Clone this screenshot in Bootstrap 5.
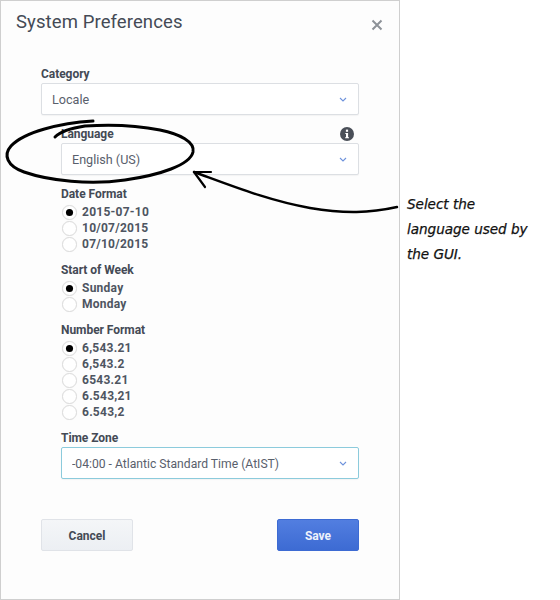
<!DOCTYPE html>
<html lang="en">
<head>
<meta charset="utf-8">
<title>System Preferences</title>
<link href="https://cdn.jsdelivr.net/npm/bootstrap@5.3.0/dist/css/bootstrap.min.css" rel="stylesheet">
<style>
html,body{margin:0;background:#fff;}
body{font-family:Roboto,"Liberation Sans",sans-serif;color:#444a55;width:560px;height:600px;overflow:hidden;position:relative;}
.dlg{width:400px;height:600px;background:#fdfdfd;border:1px solid #cfcfcf;padding:0 40px;}
.dlg-head{height:66px;margin:0 -40px;padding:11px 16px 0 15px;display:flex;justify-content:space-between;align-items:flex-start;}
.dlg-title{font-size:18.5px;line-height:21px;font-weight:400;color:#444a55;margin:0;letter-spacing:.1px;}
.dlg-x{margin-top:7px;display:block;}
.fld-label{font-size:12px;line-height:14px;font-weight:700;color:#444a55;margin:0;display:flex;justify-content:space-between;align-items:center;letter-spacing:-.05px;}
.fld-label svg{margin-right:5px;}
.sel{display:block;height:32px;margin-top:2px;padding:2px 30px 0 10px;font-size:12.6px;line-height:28px;color:#59606c;border:1px solid #dcdfe3;border-radius:2px;background-color:#fff;background-size:8px 5px;background-position:right 11px center;background-image:url("data:image/svg+xml,%3Csvg xmlns='http://www.w3.org/2000/svg' viewBox='0 0 8 5'%3E%3Cpath d='M1 1 4 4 7 1' fill='none' stroke='%236f93dc' stroke-width='1.1'/%3E%3C/svg%3E");box-shadow:0 1px 1px rgba(0,0,0,.04);font-family:inherit;}
.sel-focus{border-color:#8ccbdc;font-size:12.15px;}
.ind{margin-left:20px;}
.sec-a{margin-top:12px;}
.sec-b{margin-top:12px;}
.sec-c,.sec-d,.sec-e{margin-top:11px;}
.opts{margin-top:3px;}
.form-check.opt{min-height:0;height:16px;margin:0;padding:0 0 0 21px;display:flex;align-items:center;font-size:12px;font-weight:700;color:#4e5561;letter-spacing:.25px;}
.opt .form-check-input{float:none;margin:0 5px 0 -20px;width:15px;height:15px;flex:none;background-color:#fff;border:1px solid #dcdcdc;box-shadow:0 0 1px rgba(0,0,0,.08);}
.opt .form-check-input:checked{background-color:#fff;border-color:#dcdcdc;background-size:100%;background-image:url("data:image/svg+xml,%3Csvg xmlns='http://www.w3.org/2000/svg' viewBox='0 0 15 15'%3E%3Ccircle cx='7.5' cy='7.5' r='4.1' fill='%23000'/%3E%3C/svg%3E");}
.opt .form-check-label{line-height:16px;}
.foot{margin-top:40px;display:flex;justify-content:space-between;}
.bt-c,.bt-s{height:32px;font-size:12px;font-weight:700;border-radius:2px;padding:2px 0 0;line-height:28px;}
.bt-c{width:92px;background:linear-gradient(#f4f6f8,#eceff3);border:1px solid #e0e3e8;color:#444a55;}
.bt-s{width:82px;background:linear-gradient(#527ee0,#3d6bd3);border:1px solid #3d6bd3;color:#eef2fb;}
.notes{position:absolute;left:0;top:0;pointer-events:none;}
.note{position:absolute;left:407px;top:192px;width:150px;font-family:"DejaVu Sans",sans-serif;font-style:oblique;font-size:13.6px;line-height:25px;color:#111;letter-spacing:-.05px;-webkit-text-stroke:.25px #111;}
</style>
</head>
<body>
<div class="dlg">
  <div class="dlg-head">
    <h1 class="dlg-title">System Preferences</h1>
    <svg class="dlg-x" width="12" height="12" viewBox="0 0 12 12" aria-label="Close"><path d="M1.5 1.5 10.5 10.5M10.5 1.5 1.5 10.5" stroke="#8d9298" stroke-width="2"/></svg>
  </div>
  <form>
    <label class="fld-label">Category</label>
    <select class="form-select sel"><option>Locale</option></select>

    <div class="ind sec-a">
      <label class="fld-label">Language
        <svg width="14" height="14" viewBox="0 0 14 14" aria-label="Info"><circle cx="7" cy="7" r="7" fill="#4a4f58"/><rect x="5.9" y="2.6" width="2.2" height="2.2" fill="#fff"/><path d="M5.3 6h2.8v4.2h.9v1H5.1v-1h.9V7h-.7z" fill="#fff"/></svg>
      </label>
      <select class="form-select sel"><option>English (US)</option></select>

      <div class="sec-b">
        <div class="fld-label">Date Format</div>
        <div class="opts">
          <div class="form-check opt"><input class="form-check-input" type="radio" name="df" id="d1" checked><label class="form-check-label" for="d1">2015-07-10</label></div>
          <div class="form-check opt"><input class="form-check-input" type="radio" name="df" id="d2"><label class="form-check-label" for="d2">10/07/2015</label></div>
          <div class="form-check opt"><input class="form-check-input" type="radio" name="df" id="d3"><label class="form-check-label" for="d3">07/10/2015</label></div>
        </div>
      </div>

      <div class="sec-c">
        <div class="fld-label">Start of Week</div>
        <div class="opts">
          <div class="form-check opt"><input class="form-check-input" type="radio" name="sw" id="s1" checked><label class="form-check-label" for="s1">Sunday</label></div>
          <div class="form-check opt"><input class="form-check-input" type="radio" name="sw" id="s2"><label class="form-check-label" for="s2">Monday</label></div>
        </div>
      </div>

      <div class="sec-d">
        <div class="fld-label">Number Format</div>
        <div class="opts">
          <div class="form-check opt"><input class="form-check-input" type="radio" name="nf" id="n1" checked><label class="form-check-label" for="n1">6,543.21</label></div>
          <div class="form-check opt"><input class="form-check-input" type="radio" name="nf" id="n2"><label class="form-check-label" for="n2">6,543.2</label></div>
          <div class="form-check opt"><input class="form-check-input" type="radio" name="nf" id="n3"><label class="form-check-label" for="n3">6543.21</label></div>
          <div class="form-check opt"><input class="form-check-input" type="radio" name="nf" id="n4"><label class="form-check-label" for="n4">6.543,21</label></div>
          <div class="form-check opt"><input class="form-check-input" type="radio" name="nf" id="n5"><label class="form-check-label" for="n5">6.543,2</label></div>
        </div>
      </div>

      <div class="sec-e">
        <label class="fld-label">Time Zone</label>
        <select class="form-select sel sel-focus"><option>-04:00 - Atlantic Standard Time (AtIST)</option></select>
      </div>
    </div>

    <div class="foot">
      <button type="button" class="btn bt-c">Cancel</button>
      <button type="button" class="btn bt-s">Save</button>
    </div>
  </form>
</div>

<svg class="notes" width="560" height="600" viewBox="0 0 560 600" fill="none" stroke="#000" stroke-linecap="round">
  <path d="M93 121C60 123 24 132 11 146 3 155 7 166 24 172 50 181 90 185 125 180 160 175 190 165 193 152 195 142 180 134 160 130 130 124 100 125 85 126 72 128 60 132 55 137" stroke-width="3"/>
  <path d="M397 207C370 213 345 214 310 208 270 201 235 187 194 172" stroke-width="2.4"/>
  <path d="M194 172 211 172M194 172 205 187" stroke-width="2.2"/>
</svg>
<div class="note">Select the<br>language used by<br>the GUI.</div>
<script src="https://cdn.jsdelivr.net/npm/bootstrap@5.3.0/dist/js/bootstrap.bundle.min.js"></script>
</body>
</html>
